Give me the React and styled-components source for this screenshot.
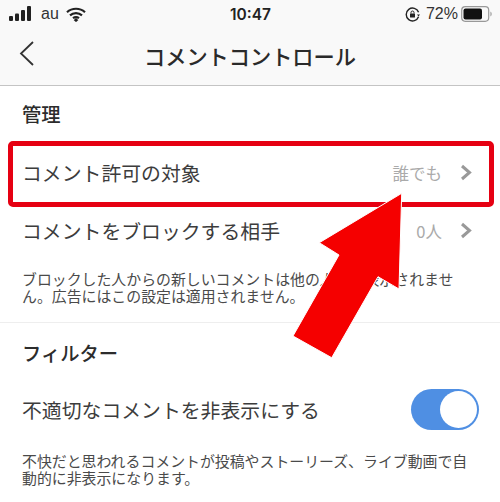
import React from "react";
import styled, { createGlobalStyle } from "styled-components";

const Global = createGlobalStyle`
  html, body { margin: 0; padding: 0; background: #fff; }
  body { font-family: "Noto Sans CJK JP", "Liberation Sans", sans-serif; }
`;
const Page = styled.div`
  position: relative; width: 500px; height: 502px; overflow: hidden; background: #fff; color: #333;
`;
const Head = styled.header`
  background: #f9f9f9; border-bottom: 1.5px solid #c4c4c4; height: 86px; box-sizing: border-box;
`;
const StatusBar = styled.div`
  display: grid; grid-template-columns: 1fr auto 1fr; align-items: center; height: 28px; padding: 0 8px 0 9px;
  font-family: "Liberation Sans", sans-serif; color: #222;
`;
const StatusSide = styled.div`
  display: flex; align-items: center; gap: ${p => p.$gap || 7}px; justify-content: ${p => p.$end ? "flex-end" : "flex-start"};
`;
const Carrier = styled.span` font-size: 16px; color: #333; margin-left: 2px; `;
const Clock = styled.span` font-family: Inter, sans-serif; font-size: 15.5px; font-weight: 600; color: #222; `;
const Percent = styled.span` font-size: 16px; color: #333; `;
const Nav = styled.nav`
  position: relative; display: flex; justify-content: center; align-items: center; height: 55px;
`;
const Back = styled.svg` position: absolute; left: 18px; top: 12px; `;
const Title = styled.h1`
  margin: 0; font-size: 21.2px; font-weight: 500; color: #2a2a2a;
`;
const Section = styled.section`
  padding: ${p => p.$top}px 0 0; border-bottom: ${p => p.$line ? "1.5px solid #eeeeee" : "none"};
  height: ${p => p.$h}px; box-sizing: border-box;
`;
const SectionTitle = styled.h2`
  margin: 0; padding: 0 22px; font-size: 19.3px; line-height: 26px; font-weight: 500; color: #2c2c2c;
`;
const Row = styled.div`
  display: flex; align-items: center; justify-content: space-between; height: ${p => p.$h || 59}px; padding: 0 28px 0 23px;
  margin-top: ${p => p.$mt || 0}px;
`;
const RowLabel = styled.span` font-size: 19.85px; color: #3c3c3c; white-space: nowrap; margin-left: -1px; `;
const RowRight = styled.span` display: flex; align-items: center; gap: 18px; `;
const RowValue = styled.span` font-size: 16.5px; color: #aaaaaa; `;
const Note = styled.p`
  margin: ${p => p.$mt}px 0 0; padding: 0 22px; font-size: 14.9px; line-height: 17px; color: #4a4a4a;
`;
const Toggle = styled.span`
  display: flex; justify-content: flex-end; width: 68px; height: 41px; border-radius: 21px; background: #4f8fe3; margin-right: -6.5px;
`;
const Knob = styled.span`
  width: 37px; height: 37px; margin: 2px; border-radius: 50%; background: #fff;
`;
const Highlight = styled.div`
  position: absolute; left: 8px; top: 141px; width: 486px; height: 66px; box-sizing: border-box;
  border: 5px solid #e60012; border-radius: 5px;
`;
const Arrow = styled.svg` position: absolute; left: 0; top: 0; `;

const Chevron = () => (
  <svg width="12" height="17" viewBox="0 0 12 17"><path d="M2 2l7.5 6.5L2 15" fill="none" stroke="#999" strokeWidth="3"/></svg>
);

export default function App() {
  return (
    <Page>
      <Global />
      <Head>
        <StatusBar>
          <StatusSide>
            <svg width="23" height="16" viewBox="0 0 23 16" fill="#222">
              <rect x="0" y="10" width="4" height="5" rx="1"/>
              <rect x="6" y="7.5" width="4" height="7.5" rx="1"/>
              <rect x="12" y="4" width="4" height="11" rx="1"/>
              <rect x="18" y="0" width="4" height="15" rx="1"/>
            </svg>
            <Carrier>au</Carrier>
            <svg width="20" height="15" viewBox="0 0 20 15" fill="none" stroke="#222" strokeWidth="2.2">
              <path d="M1 5.2c5-4.6 13-4.6 18 0"/>
              <path d="M4 8.4c3.4-3 8.6-3 12 0"/>
              <path d="M7 11.2c1.8-1.3 4.2-1.3 6 0"/>
              <path d="M10 11.2l2 2-2 1.6-2-1.6z" fill="#222" strokeWidth="0.5"/>
            </svg>
          </StatusSide>
          <Clock>10:47</Clock>
          <StatusSide $end $gap={6}>
            <svg width="15" height="15" viewBox="0 0 15 15">
              <path d="M13.6 5.2A6.4 6.4 0 1 0 13.6 9.8" fill="none" stroke="#222" strokeWidth="1.4"/>
              <path d="M12 7.5h3l-1.5 2z" fill="#222"/>
              <rect x="5" y="6.5" width="5" height="4" rx="0.6" fill="#222"/>
              <path d="M6 6.5V5.5a1.5 1.5 0 0 1 3 0v1" fill="none" stroke="#222"/>
            </svg>
            <Percent>72%</Percent>
            <svg width="31" height="16" viewBox="0 0 31 16" style={{ marginLeft: -3 }}>
              <rect x="0.7" y="0.7" width="27" height="14.6" rx="3.5" fill="none" stroke="#999" strokeWidth="1.2"/>
              <rect x="2.5" y="2.5" width="18.5" height="11" rx="2" fill="#111"/>
              <path d="M29.3 5.5c1 .4 1.5 1.3 1.5 2.5s-.5 2.1-1.5 2.5z" fill="#aaa"/>
            </svg>
          </StatusSide>
        </StatusBar>
        <Nav>
          <Back width="18" height="27" viewBox="0 0 18 27"><path d="M15 2L3 13.5 15 25" fill="none" stroke="#333" strokeWidth="1.8"/></Back>
          <Title>コメントコントロール</Title>
        </Nav>
      </Head>
      <Section $top={15} $h={237} $line>
        <SectionTitle>管理</SectionTitle>
        <Row $mt={16}>
          <RowLabel>コメント許可の対象</RowLabel>
          <RowRight><RowValue>誰でも</RowValue><Chevron /></RowRight>
        </Row>
        <Row $h={57}>
          <RowLabel>コメントをブロックする相手</RowLabel>
          <RowRight><RowValue>0人</RowValue><Chevron /></RowRight>
        </Row>
        <Note $mt={11}>ブロックした人からの新しいコメントは他の人には表示されません。広告にはこの設定は適用されません。</Note>
      </Section>
      <Section $top={17} $h={179}>
        <SectionTitle>フィルター</SectionTitle>
        <Row $mt={13} $h={61}>
          <RowLabel>不適切なコメントを非表示にする</RowLabel>
          <Toggle><Knob /></Toggle>
        </Row>
        <Note $mt={12}>不快だと思われるコメントが投稿やストーリーズ、ライブ動画で自動的に非表示になります。</Note>
      </Section>
      <Highlight />
      <Arrow width="500" height="502" viewBox="0 0 500 502">
        <polygon points="401.7,193.3 319.3,242.7 339,255 293,336 331.7,357.7 378,276.7 399,289" fill="#f50000" stroke="#fff" strokeWidth="1" />
      </Arrow>
    </Page>
  );
}
